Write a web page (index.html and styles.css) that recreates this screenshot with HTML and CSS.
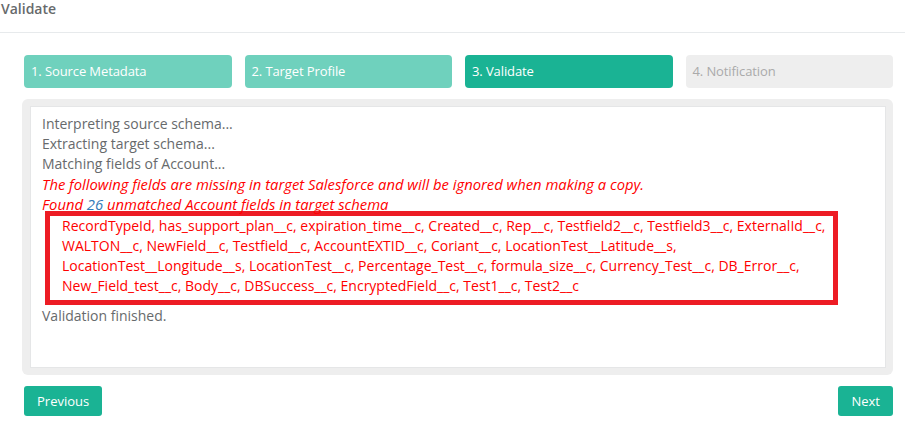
FILE: index.html
```html
<!DOCTYPE html>
<html>
<head>
<meta charset="utf-8">
<link rel="stylesheet" href="styles.css">
</head>
<body>
<div class="header"><span class="title">Validate</span></div>
<div class="wizard">
  <div class="steps">
    <div class="step done">1. Source Metadata</div>
    <div class="step done">2. Target Profile</div>
    <div class="step current">3. Validate</div>
    <div class="step todo">4. Notification</div>
  </div>
  <div class="panel">
    <div class="log">
      <div class="line">Interpreting source schema...</div>
      <div class="line">Extracting target schema...</div>
      <div class="line">Matching fields of Account...</div>
      <div class="line warn">The following fields are missing in target Salesforce and will be ignored when making a copy.</div>
      <div class="line warn">Found <span class="count">26</span> unmatched Account fields in target schema</div>
      <div class="fields">
        <div class="fline">RecordTypeId, has_support_plan__c, expiration_time__c, Created__c, Rep__c, Testfield2__c, Testfield3__c, ExternalId__c,</div>
        <div class="fline">WALTON__c, NewField__c, Testfield__c, AccountEXTID__c, Coriant__c, LocationTest__Latitude__s,</div>
        <div class="fline">LocationTest__Longitude__s, LocationTest__c, Percentage_Test__c, formula_size__c, Currency_Test__c, DB_Error__c,</div>
        <div class="fline">New_Field_test__c, Body__c, DBSuccess__c, EncryptedField__c, Test1__c, Test2__c</div>
      </div>
      <div class="line finish">Validation finished.</div>
    </div>
  </div>
  <div class="actions">
    <button class="btn">Previous</button>
    <button class="btn">Next</button>
  </div>
</div>
</body>
</html>
```
FILE: styles.css
```css
html, body {
  margin: 0;
  padding: 0;
  background: #fff;
  font-family: "Open Sans", "Liberation Sans", sans-serif;
  color: #676a6c;
}
.header {
  height: 33px;
  border-bottom: 1px solid #e7eaec;
  box-sizing: border-box;
}
.title {
  display: block;
  padding: 0 0 0 1px;
  font-size: 14px;
  font-weight: 600;
  line-height: 17px;
  color: #676a6c;
}
.wizard {
  padding: 0 12px 0 24px;
}
.steps {
  margin-top: 22px;
  display: grid;
  grid-template-columns: repeat(4, 1fr);
  gap: 13px;
}
.step {
  height: 33px;
  line-height: 33px;
  border-radius: 4px;
  padding-left: 7px;
  font-size: 13px;
  letter-spacing: -0.1px;
  color: #fff;
}
.step.done { background: #6fd1bd; }
.step.current { background: #1ab394; }
.step.todo { background: #eeeeee; color: #aaaaaa; }
.panel {
  margin-top: 11px;
  margin-left: -2px;
  background: #eeeeee;
  border-radius: 6px;
  padding: 7px 7px 7px 8px;
}
.log {
  background: #fff;
  height: 262px;
  box-sizing: border-box;
  padding: 7px 11px 0 11px;
  border: 1px solid #e5e6e7;
  font-size: 14px;
  line-height: 20px;
}
.line { white-space: nowrap; }
.warn { color: #ff0000; font-style: italic; font-size: 14.8px; }
.count { color: #337ab7; }
.fields {
  margin: -3px 0 0 3px;
  width: 793px;
  box-sizing: border-box;
  border: 5px solid #ed1c24;
  padding: 0 0 4px 12px;
  color: #ff0000;
}
.fline { white-space: nowrap; }
.finish { margin-top: 1px; }
.actions {
  margin-top: 11px;
  display: flex;
  justify-content: space-between;
}
.btn {
  background: #1ab394;
  border: none;
  border-radius: 3px;
  color: #fff;
  font-family: "Open Sans", "Liberation Sans", sans-serif;
  font-size: 13px;
  height: 30px;
  padding: 0 13px;
}
```
